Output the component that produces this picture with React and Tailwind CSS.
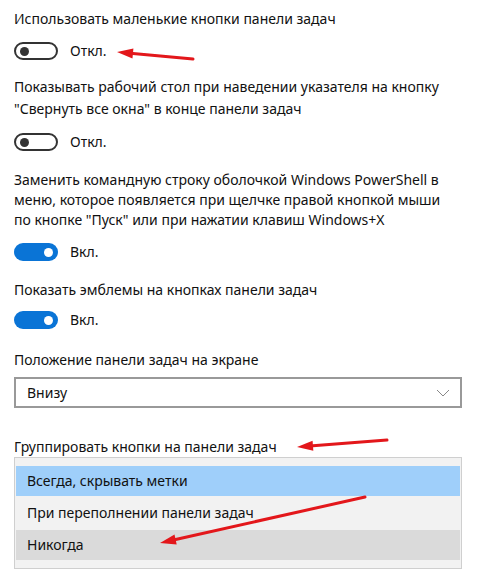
import React from "react";

function Toggle({ on }) {
  if (on) {
    return (
      <div className="w-[44px] h-[18px] rounded-full bg-[#0a74d6] flex items-center justify-end pr-[5px]">
        <div className="w-[9px] h-[9px] rounded-full bg-white" />
      </div>
    );
  }
  return (
    <div className="w-[44px] h-[18px] rounded-full border-2 border-[#333] flex items-center pl-[4px]">
      <div className="w-[9px] h-[9px] rounded-full bg-[#333]" />
    </div>
  );
}

function ToggleRow({ on }) {
  return (
    <div className="flex items-center gap-[12px] h-[20px]">
      <Toggle on={on} />
      <span>{on ? "Вкл." : "Откл."}</span>
    </div>
  );
}

function Arrow({ x1, y1, x2, y2 }) {
  const dx = x2 - x1;
  const dy = y2 - y1;
  const len = Math.sqrt(dx * dx + dy * dy);
  const ux = dx / len;
  const uy = dy / len;
  const hl = 16;
  const hw = 5;
  const bx = x2 - ux * hl;
  const by = y2 - uy * hl;
  const px = -uy;
  const py = ux;
  return (
    <g>
      <line x1={x1} y1={y1} x2={bx} y2={by} stroke="#e3171b" strokeWidth="3" strokeLinecap="round" />
      <polygon
        points={`${x2},${y2} ${bx + px * hw},${by + py * hw} ${bx - px * hw},${by - py * hw}`}
        fill="#e3171b"
      />
    </g>
  );
}

export default function App() {
  return (
    <div
      className="relative w-[487px] h-[584px] bg-white overflow-hidden text-[14px] leading-[20px] text-[#111] whitespace-nowrap"
      style={{ fontFamily: '"Noto Sans", "Open Sans", sans-serif' }}
    >
      <div className="pl-[14px] pr-[25px] pt-[9px] flex flex-col">
        <div>Использовать маленькие кнопки панели задач</div>
        <div className="mt-[12px]"><ToggleRow on={false} /></div>

        <div className="mt-[15px]">
          <div className="leading-[22px]">Показывать рабочий стол при наведении указателя на кнопку</div>
          <div className="leading-[22px]">"Свернуть все окна" в конце панели задач</div>
        </div>
        <div className="mt-[12px]"><ToggleRow on={false} /></div>

        <div className="mt-[18px]">
          <div>Заменить командную строку оболочкой Windows PowerShell в</div>
          <div>меню, которое появляется при щелчке правой кнопкой мыши</div>
          <div>по кнопке "Пуск" или при нажатии клавиш Windows+X</div>
        </div>
        <div className="mt-[12px]"><ToggleRow on={true} /></div>

        <div className="mt-[18px]">Показать эмблемы на кнопках панели задач</div>
        <div className="mt-[10px]"><ToggleRow on={true} /></div>

        <div className="mt-[20px]">Положение панели задач на экране</div>
        <div className="mt-[7px] h-[31px] border-2 border-[#999] flex items-center justify-between pl-[11px] pr-[10px]">
          <span>Внизу</span>
          <svg width="14" height="8" viewBox="0 0 14 8">
            <polyline points="1,1 7,7 13,1" fill="none" stroke="#888" strokeWidth="1" />
          </svg>
        </div>

        <div className="mt-[29px]">Группировать кнопки на панели задач</div>
        <div className="border border-[#cfcfcf] bg-[#f2f2f2] py-[8px] px-[1px]">
          <div className="h-[30px] bg-[#9fcffa] flex items-center pl-[11px]">Всегда, скрывать метки</div>
          <div className="h-[34px] flex items-center pl-[11px]">При переполнении панели задач</div>
          <div className="h-[30px] bg-[#dadada] flex items-center pl-[11px]">Никогда</div>
        </div>
      </div>

      <svg className="absolute inset-0 pointer-events-none" width="487" height="584">
        <Arrow x1={193} y1={59} x2={117} y2={52} />
        <Arrow x1={387} y1={440} x2={297} y2={447} />
        <Arrow x1={365} y1={497} x2={160} y2={543} />
      </svg>
    </div>
  );
}
